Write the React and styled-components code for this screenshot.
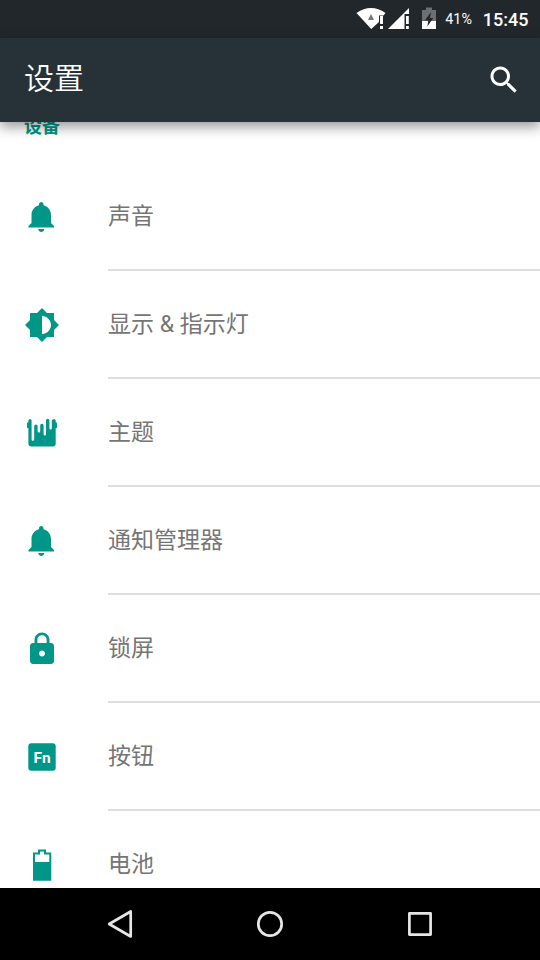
import styled, { createGlobalStyle } from "styled-components";

const GlobalStyle = createGlobalStyle`
  * {
    box-sizing: border-box;
  }

  body {
    margin: 0;
    background: #fff;
    font-family: Roboto, "Noto Sans CJK SC", sans-serif;
  }
`;

const Screen = styled.div`
  display: flex;
  flex-direction: column;
  width: 540px;
  height: 960px;
  overflow: hidden;
  background: #fff;
`;

const StatusBar = styled.div`
  display: flex;
  flex: none;
  align-items: center;
  justify-content: flex-end;
  height: 38px;
  padding-right: 11.5px;
  background: #21272b;
  color: #fff;
`;

const StatusIcons = styled.svg`
  display: block;
  width: 90px;
  height: 38px;
`;

const Percent = styled.span`
  width: 37.5px;
  font-size: 14.3px;
  line-height: 38px;
`;

const Clock = styled.span`
  font-size: 18px;
  font-weight: 500;
  line-height: 39px;
`;

const Toolbar = styled.header`
  display: flex;
  flex: none;
  align-items: center;
  justify-content: space-between;
  height: 84px;
  padding: 0 18px 0 24px;
  background: #263238;
  color: #fff;
  z-index: 1;
  box-shadow: 0 5px 12px rgba(0, 0, 0, 0.4);
`;

const Title = styled.h1`
  margin: 0;
  padding-bottom: 2px;
  font-size: 30px;
  font-weight: 350;
  line-height: 80px;
`;

const List = styled.main`
  flex: 1;
  min-height: 0;
  overflow: hidden;
`;

const Section = styled.h2`
  height: 41px;
  margin: 0;
  padding-left: 24px;
  color: #009688;
  font-size: 18px;
  font-weight: 700;
  line-height: 10px;
`;

const Row = styled.div`
  display: flex;
  height: 108px;
  padding-left: 24px;
`;

const IconSlot = styled.div`
  width: 84px;
  padding-top: 36px;
  color: #009688;
`;

const Label = styled.div`
  flex: 1;
  border-bottom: 2px solid #dedede;
  color: #757575;
  font-size: 23px;
  line-height: 108px;
`;

const Icon = styled.svg`
  display: block;
  width: 36px;
  height: 36px;
  fill: currentColor;
`;

const FnText = styled.text`
  fill: #fff;
  font-size: 15.5px;
  font-weight: 700;
  text-anchor: middle;
`;

const NavBar = styled.nav`
  display: flex;
  flex: none;
  align-items: center;
  justify-content: center;
  gap: 114px;
  height: 72px;
  background: #000;
`;

const NavIcon = styled.svg`
  display: block;
  width: 36px;
  height: 36px;
  fill: none;
  stroke: #e6e6e6;
  stroke-width: 2.7;
  stroke-linejoin: round;
`;

function BellIcon() {
  return (
    <Icon viewBox="0 0 24 24">
      <path d="M11.5 22c1.1 0 2-.9 2-2h-4c0 1.1.9 2 2 2zm6.5-6v-5.5c0-3.07-2.13-5.64-5-6.32V3.5c0-.83-.67-1.5-1.5-1.5S10 2.67 10 3.5v.68c-2.87.68-5 3.25-5 6.32V16l-2 2v1h17v-1l-2-2z" />
    </Icon>
  );
}

function DisplayIcon() {
  return (
    <Icon viewBox="0 0 24 24">
      <path d="M20 15.31L23.31 12 20 8.69V4h-4.69L12 .69 8.69 4H4v4.69L.69 12 4 15.31V20h4.69L12 23.31 15.31 20H20v-4.69zM12 18V6c3.31 0 6 2.69 6 6s-2.69 6-6 6z" />
    </Icon>
  );
}

// paint bucket with drips running down
function ThemeIcon() {
  return (
    <Icon viewBox="0 0 36 36">
      <path d="M4.4 5.5Q4.6 4 6 4Q7.6 4 7.6 5.5V24.4a1.3 1.3 0 0 0 2.6 0V11.3a1.7 1.7 0 0 1 3.4 0V16.3a1.3 1.3 0 0 0 2.6 0V10.5a1.7 1.7 0 0 1 3.4 0V19.3a1.2 1.2 0 0 0 2.4 0V5.5a1.7 1.7 0 0 1 3.4 0V13.3a1.2 1.2 0 0 0 2.4 0V5.5Q28.4 4 30 4Q31.5 4 31.7 5.5V7.3Q33 7.3 33 8.5V12Q33 13.3 31.7 13.3V28.6Q31.7 31.6 28.7 31.6H7.4Q4.4 31.6 4.4 28.6V13.3Q3 13.3 3 12V8.5Q3 7.3 4.4 7.3Z" />
    </Icon>
  );
}

function LockIcon() {
  return (
    <Icon viewBox="0 0 24 24">
      <path d="M18 8h-1V6c0-2.76-2.24-5-5-5S7 3.24 7 6v2H6c-1.1 0-2 .9-2 2v10c0 1.1.9 2 2 2h12c1.1 0 2-.9 2-2V10c0-1.1-.9-2-2-2zm-6 9c-1.1 0-2-.9-2-2s.9-2 2-2 2 .9 2 2-.9 2-2 2zm3.1-9H8.9V6c0-1.71 1.39-3.1 3.1-3.1 1.71 0 3.1 1.39 3.1 3.1v2z" />
    </Icon>
  );
}

function ButtonsIcon() {
  return (
    <Icon viewBox="0 0 36 36">
      <rect x="4.3" y="4.3" width="27.4" height="27.4" rx="3" />
      <FnText x="18" y="23.6">Fn</FnText>
    </Icon>
  );
}

function BatteryIcon() {
  return (
    <Icon viewBox="0 0 36 36">
      <path fillRule="evenodd" d="M14 2.4H22V5.4H27.3V33.8H9V5.4H14ZM16 4.4V7.4H11V15H25.3V7.4H20V4.4Z" />
    </Icon>
  );
}

const items = [
  { label: "声音", icon: BellIcon },
  { label: "显示 & 指示灯", icon: DisplayIcon },
  { label: "主题", icon: ThemeIcon },
  { label: "通知管理器", icon: BellIcon },
  { label: "锁屏", icon: LockIcon },
  { label: "按钮", icon: ButtonsIcon },
  { label: "电池", icon: BatteryIcon },
];

export default function App() {
  return (
    <Screen>
      <GlobalStyle />
      <StatusBar>
        {/* wifi, signal, battery */}
        <StatusIcons viewBox="355 0 90 38">
          <path fill="#fff" d="M356.5 13Q371 3 385.5 13L383.5 15.5H379V22L371.2 29Z" />
          <path fill="#777" d="M371 14L374 20H368Z" />
          <path fill="#fff" d="M380 16h3v8h-3zM380 26h3v3h-3z" />
          <path fill="#fff" d="M409 8V14H404.5V29H388Z" />
          <path fill="#fff" d="M406 16h2.8v8H406zM406 26h2.8v3H406z" />
          <path fill="#6c7073" d="M426 7.5h6V10h4v11h-14V10h4z" />
          <path fill="#fff" d="M422 21h14v8h-14z" />
          <path fill="#21272b" d="M431 12L424.8 20.5H428.3L427.3 26.5L433.3 18H430Z" />
        </StatusIcons>
        <Percent>41%</Percent>
        <Clock>15:45</Clock>
      </StatusBar>
      <Toolbar>
        <Title>设置</Title>
        <Icon viewBox="0 0 24 24">
          <path d="M15.5 14h-.79l-.28-.27C15.41 12.59 16 11.11 16 9.5 16 5.91 13.09 3 9.5 3S3 5.91 3 9.5 5.91 16 9.5 16c1.61 0 3.09-.59 4.23-1.57l.27.28v.79l5 4.99L20.49 19l-4.99-5zm-6 0C7.01 14 5 11.99 5 9.5S7.01 5 9.5 5 14 7.01 14 9.5 11.99 14 9.5 14z" />
        </Icon>
      </Toolbar>
      <List>
        <Section>设备</Section>
        {items.map((item) => (
          <Row key={item.label}>
            <IconSlot>
              <item.icon />
            </IconSlot>
            <Label>{item.label}</Label>
          </Row>
        ))}
      </List>
      <NavBar>
        <NavIcon viewBox="0 0 36 36">
          <path d="M7.2 18L28.7 5.5V30.5Z" />
        </NavIcon>
        <NavIcon viewBox="0 0 36 36">
          <circle cx="18" cy="18" r="11.7" />
        </NavIcon>
        <NavIcon viewBox="0 0 36 36">
          <rect x="7.4" y="7.4" width="21.2" height="21.2" />
        </NavIcon>
      </NavBar>
    </Screen>
  );
}
